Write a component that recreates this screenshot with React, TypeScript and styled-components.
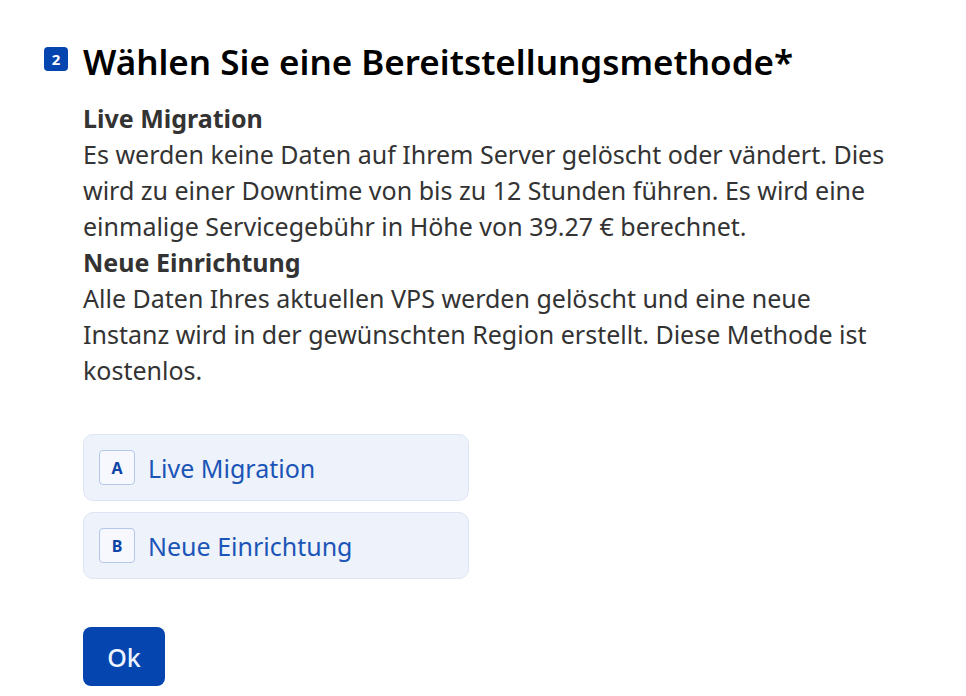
import React from 'react';
import styled, {createGlobalStyle} from 'styled-components';

const GlobalStyle = createGlobalStyle`
  body {
    margin: 0;
    background: #fff;
    font-family: "Noto Sans", "Open Sans", sans-serif;
  }
`;

const options = [
  {key: 'A', label: 'Live Migration'},
  {key: 'B', label: 'Neue Einrichtung'},
];

export default function App() {
  return (
    <>
      <GlobalStyle />
      <Page>
        <Question>
          <Number>2</Number>
          <Body>
            <Title>Wählen Sie eine Bereitstellungsmethode*</Title>
            <Description>
              <strong>Live Migration</strong>
              <br />
              Es werden keine Daten auf Ihrem Server gelöscht oder vändert. Dies
              wird zu einer Downtime von bis zu 12 Stunden führen. Es wird eine
              einmalige Servicegebühr in Höhe von 39.27 € berechnet.
              <br />
              <strong>Neue Einrichtung</strong>
              <br />
              Alle Daten Ihres aktuellen VPS werden gelöscht und eine neue
              Instanz wird in der gewünschten Region erstellt. Diese Methode ist
              kostenlos.
            </Description>
            <Choices>
              {options.map(o => (
                <Choice key={o.key}>
                  <Key>{o.key}</Key>
                  <ChoiceLabel>{o.label}</ChoiceLabel>
                </Choice>
              ))}
            </Choices>
            <OkButton>Ok</OkButton>
          </Body>
        </Question>
      </Page>
    </>
  );
}

const Page = styled.div`
  padding: 39px 0 0 44px;
`;

const Question = styled.div`
  display: flex;
  align-items: flex-start;
  gap: 15px;
`;

const Number = styled.div`
  flex: 0 0 auto;
  width: 24px;
  height: 24px;
  margin-top: 8px;
  border-radius: 4px;
  background: #0445af;
  color: #fff;
  font-size: 15px;
  font-weight: 700;
  display: flex;
  align-items: center;
  justify-content: center;
`;

const Body = styled.div`
  display: flex;
  flex-direction: column;
  align-items: flex-start;
  width: 810px;
`;

const Title = styled.h1`
  margin: 0;
  font-size: 35px;
  font-weight: 600;
  line-height: 46px;
  color: #000;
`;

const Description = styled.p`
  margin: 15px 0 0;
  font-size: 25px;
  line-height: 36px;
  color: #333;

  strong {
    font-weight: 700;
  }
`;

const Choices = styled.div`
  margin-top: 46px;
  display: flex;
  flex-direction: column;
  gap: 11px;
`;

const Choice = styled.div`
  box-sizing: border-box;
  width: 386px;
  height: 67px;
  padding: 0 15px;
  display: flex;
  align-items: center;
  gap: 13px;
  background: #eef2fa;
  border: 1px solid #dde5f4;
  border-radius: 10px;
`;

const Key = styled.span`
  box-sizing: border-box;
  width: 36px;
  height: 35px;
  display: flex;
  align-items: center;
  justify-content: center;
  background: #f6f8fd;
  border: 1px solid #b5c7ea;
  border-radius: 4px;
  color: #0b44a6;
  font-size: 16px;
  font-weight: 700;
`;

const ChoiceLabel = styled.span`
  font-size: 25px;
  color: #1b55b7;
`;

const OkButton = styled.button`
  margin-top: 48px;
  width: 82px;
  height: 59px;
  border: none;
  border-radius: 8px;
  background: #0445af;
  color: #eef3ff;
  font-family: inherit;
  font-size: 25px;
  font-weight: 500;
  cursor: pointer;
`;
